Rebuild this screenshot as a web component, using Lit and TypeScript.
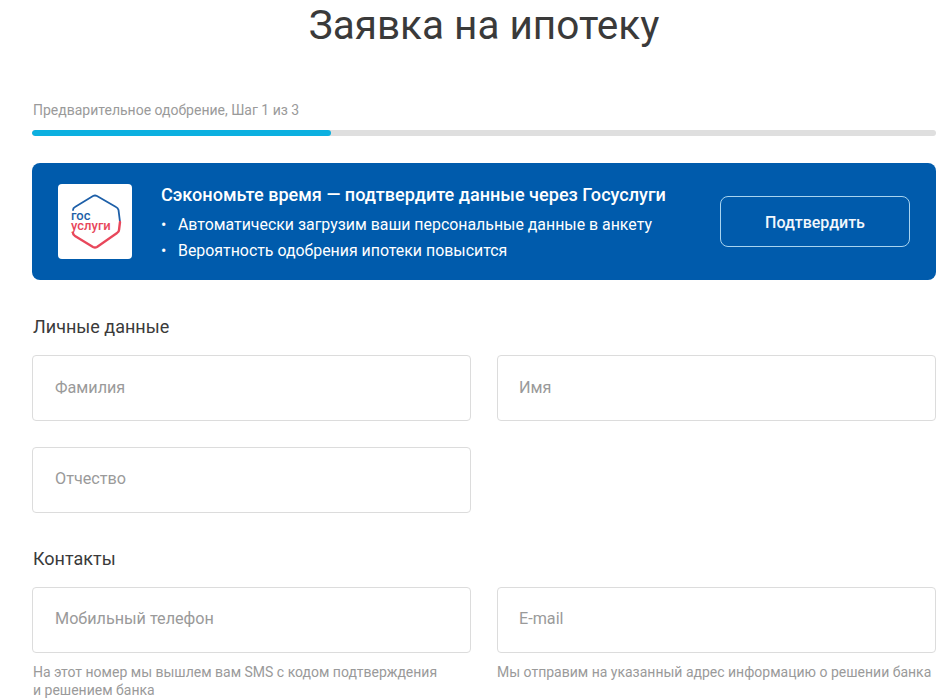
import { LitElement, html, css } from "lit";
import { customElement } from "lit/decorators.js";

@customElement("app-root")
export class AppRoot extends LitElement {
  static styles = css`
    :host {
      display: block;
      height: 700px;
      overflow: hidden;
      background: #fff;
      font-family: Roboto, "Liberation Sans", sans-serif;
      color: #333;
    }
    .page {
      width: 904px;
      padding: 0 13px 0 32px;
      display: flex;
      flex-direction: column;
    }
    h1 {
      margin: 0;
      height: 50px;
      line-height: 50px;
      font-size: 40.5px;
      font-weight: 400;
      text-align: center;
      color: #3a3a3a;
    }
    .step {
      margin-top: 51px;
      height: 18px;
      line-height: 18px;
      font-size: 14px;
      font-weight: 400;
      padding-left: 1px;
      color: #9a9a9a;
    }
    .track {
      margin-top: 11px;
      height: 6px;
      border-radius: 3px;
      background: #dfdfdf;
      overflow: hidden;
    }
    .fill {
      height: 100%;
      border-radius: 3px;
      background: #0cb0e0;
    }
    .banner {
      margin-top: 27px;
      height: 117px;
      border-radius: 8px;
      background: #005bac;
      color: #fff;
      display: flex;
      align-items: center;
      padding: 0 26px;
      box-sizing: border-box;
    }
    .logo {
      width: 74px;
      height: 75px;
      flex: none;
      display: block;
    }
    .info {
      margin-left: 29px;
      padding-top: 3px;
      flex: 1;
      min-width: 0;
    }
    .info h2 {
      margin: 0 0 5px;
      font-size: 18.1px;
      line-height: 24px;
      font-weight: 500;
    }
    .info ul {
      margin: 0;
      padding: 0;
      list-style: none;
      font-size: 15.9px;
      line-height: 26px;
    }
    .info li {
      display: flex;
    }
    .info li::before {
      content: "•";
      width: 17px;
      flex: none;
    }
    .confirm {
      flex: none;
      width: 190px;
      height: 51px;
      box-sizing: border-box;
      border: 1px solid #a8d4f0;
      border-radius: 8px;
      background: transparent;
      color: #f2f7fc;
      padding: 2px 0 0;
      font: 500 16px Roboto, "Liberation Sans", sans-serif;
    }
    h3 {
      margin: 0;
      padding-left: 1px;
      font-size: 18px;
      line-height: 24px;
      font-weight: 400;
      color: #3a3a3a;
    }
    .h-personal { margin-top: 35px; }
    .h-contacts { margin-top: 34.5px; }
    .grid {
      display: grid;
      grid-template-columns: 439px 439px;
      column-gap: 26px;
      row-gap: 26.5px;
      margin-top: 16px;
    }
    .field {
      height: 65.5px;
      box-sizing: border-box;
      border: 1px solid #dcdcdc;
      border-radius: 4px;
      padding: 0 0 1px 22px;
      display: flex;
      align-items: center;
      font-size: 16.2px;
      font-weight: 400;
      color: #9a9a9a;
    }
    .field.second { padding-bottom: 3px; }
    .right { padding-left: 21px; }
    .contacts .field { height: 66px; padding-bottom: 3px; }
    .hint {
      margin-top: 10px;
      font-size: 14px;
      line-height: 18px;
      font-weight: 400;
      color: #9a9a9a;
      padding-left: 1px;
    }
    .hint-right { padding-left: 0; }
    .cell { min-width: 0; }
  `;

  render() {
    return html`
      <div class="page">
        <h1>Заявка на ипотеку</h1>
        <div class="step">Предварительное одобрение, Шаг 1 из 3</div>
        <div class="track"><div class="fill" style="width:33.1%"></div></div>
        <div class="banner">
          <svg class="logo" viewBox="0 0 74 75">
            <rect width="74" height="75" rx="4" fill="#fff"/>
            <path d="M15 26 Q15 24 17 23 L35 12 Q37 11 39 12 L58 23 Q60 24 60.5 26 L62 38" fill="none" stroke="#1d5fa8" stroke-width="1.8" stroke-linecap="round"/>
            <path d="M62 38 L61 46 Q61 48 59 49 L39 63 Q37 64 35 63 L17 52 Q15 51 15 49" fill="none" stroke="#e8475b" stroke-width="2.4" stroke-linecap="round"/>
            <text font-family="Roboto, sans-serif" font-size="13" font-weight="500">
              <tspan x="13" y="36" fill="#1d5fa8">гос</tspan>
              <tspan x="13" y="46" fill="#e8475b">услуги</tspan>
            </text>
          </svg>
          <div class="info">
            <h2>Сэкономьте время — подтвердите данные через Госуслуги</h2>
            <ul>
              <li>Автоматически загрузим ваши персональные данные в анкету</li>
              <li>Вероятность одобрения ипотеки повысится</li>
            </ul>
          </div>
          <button class="confirm">Подтвердить</button>
        </div>
        <h3 class="h-personal">Личные данные</h3>
        <div class="grid">
          <div class="field">Фамилия</div>
          <div class="field right">Имя</div>
          <div class="field second">Отчество</div>
        </div>
        <h3 class="h-contacts">Контакты</h3>
        <div class="grid contacts">
          <div class="cell">
            <div class="field">Мобильный телефон</div>
            <div class="hint">На этот номер мы вышлем вам SMS с кодом подтверждения<br />и решением банка</div>
          </div>
          <div class="cell">
            <div class="field right">E-mail</div>
            <div class="hint hint-right">Мы отправим на указанный адрес информацию о решении банка</div>
          </div>
        </div>
      </div>
    `;
  }
}
